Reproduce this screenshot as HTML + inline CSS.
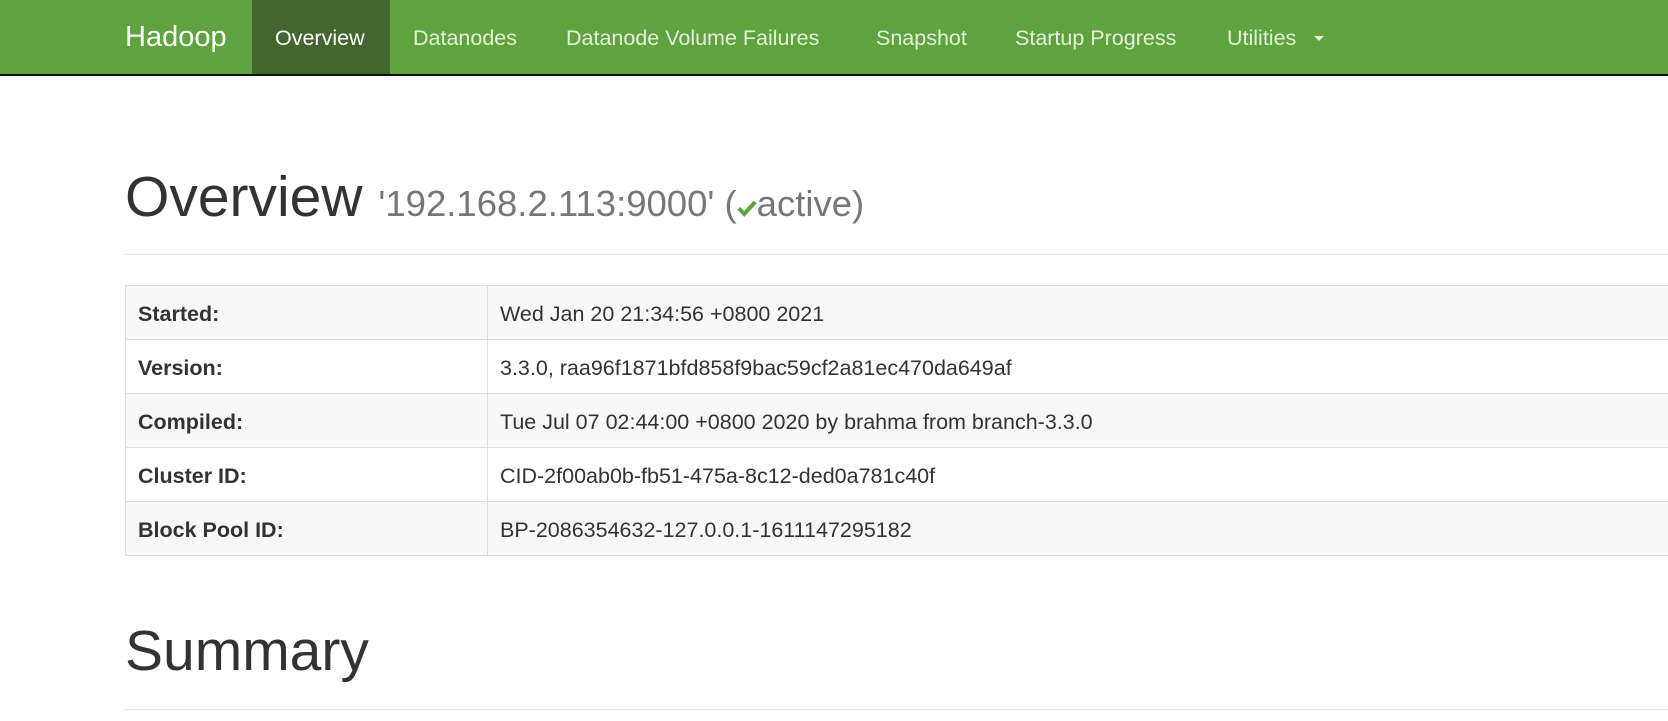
<!DOCTYPE html>
<html><head><meta charset="utf-8"><style>
html,body{margin:0;padding:0;width:1668px;height:721px;overflow:hidden;background:#fff;font-family:"Liberation Sans",sans-serif;color:#333}
.nav{position:absolute;left:0;top:0;width:1668px;height:74px;background:#5fa33e;border-bottom:2px solid #111}
.act{position:absolute;left:252px;top:0;width:138px;height:74px;background:#43662f}
.ni{position:absolute;top:28px;font-size:21.5px;line-height:20px;color:#e4f0dc;white-space:nowrap}
.brand{position:absolute;left:125px;top:23px;font-size:29px;line-height:29px;color:#fff}
.h{position:absolute;left:125px;white-space:nowrap}
.hr{position:absolute;left:125px;width:1543px;height:1px;background:#e8e8e8}
table{position:absolute;left:125px;top:285px;width:1560px;border-collapse:collapse}
td{height:54px;border:1px solid #ddd;font-size:21.5px;padding:3px 0 0 12px;vertical-align:middle;line-height:20px;box-sizing:border-box}
td.l{width:362px;font-weight:bold}
tr:nth-child(odd) td{background:#f8f8f8}
</style></head><body>
<div class="nav">
<div class="act"></div>
<div class="brand">Hadoop</div>
<div class="ni" style="left:275px;color:#fff">Overview</div>
<div class="ni" style="left:413px">Datanodes</div>
<div class="ni" style="left:566px">Datanode Volume Failures</div>
<div class="ni" style="left:876px">Snapshot</div>
<div class="ni" style="left:1015px">Startup Progress</div>
<div class="ni" style="left:1227px">Utilities</div>
<div style="position:absolute;left:1314px;top:36px;width:0;height:0;border-left:5px solid transparent;border-right:5px solid transparent;border-top:5px solid #e4f0dc"></div>
</div>
<div class="h" style="top:169px;font-size:57px;line-height:57px">Overview <span style="font-size:36.5px;color:#777">'192.168.2.113:9000' (<svg width="20" height="19" viewBox="0 0 22 20" style="vertical-align:-1px"><path d="M2 11 L8 17 L20 4" stroke="#5fa33e" stroke-width="4.5" fill="none"/></svg>active)</span></div>
<div class="hr" style="top:254px"></div>
<table>
<tr><td class="l">Started:</td><td>Wed Jan 20 21:34:56 +0800 2021</td></tr>
<tr><td class="l">Version:</td><td>3.3.0, raa96f1871bfd858f9bac59cf2a81ec470da649af</td></tr>
<tr><td class="l">Compiled:</td><td>Tue Jul 07 02:44:00 +0800 2020 by brahma from branch-3.3.0</td></tr>
<tr><td class="l">Cluster ID:</td><td>CID-2f00ab0b-fb51-475a-8c12-ded0a781c40f</td></tr>
<tr><td class="l">Block Pool ID:</td><td>BP-2086354632-127.0.0.1-1611147295182</td></tr>
</table>
<div class="h" style="top:622px;font-size:57px;line-height:59px">Summary</div>
<div class="hr" style="top:709px"></div>
</body></html>
